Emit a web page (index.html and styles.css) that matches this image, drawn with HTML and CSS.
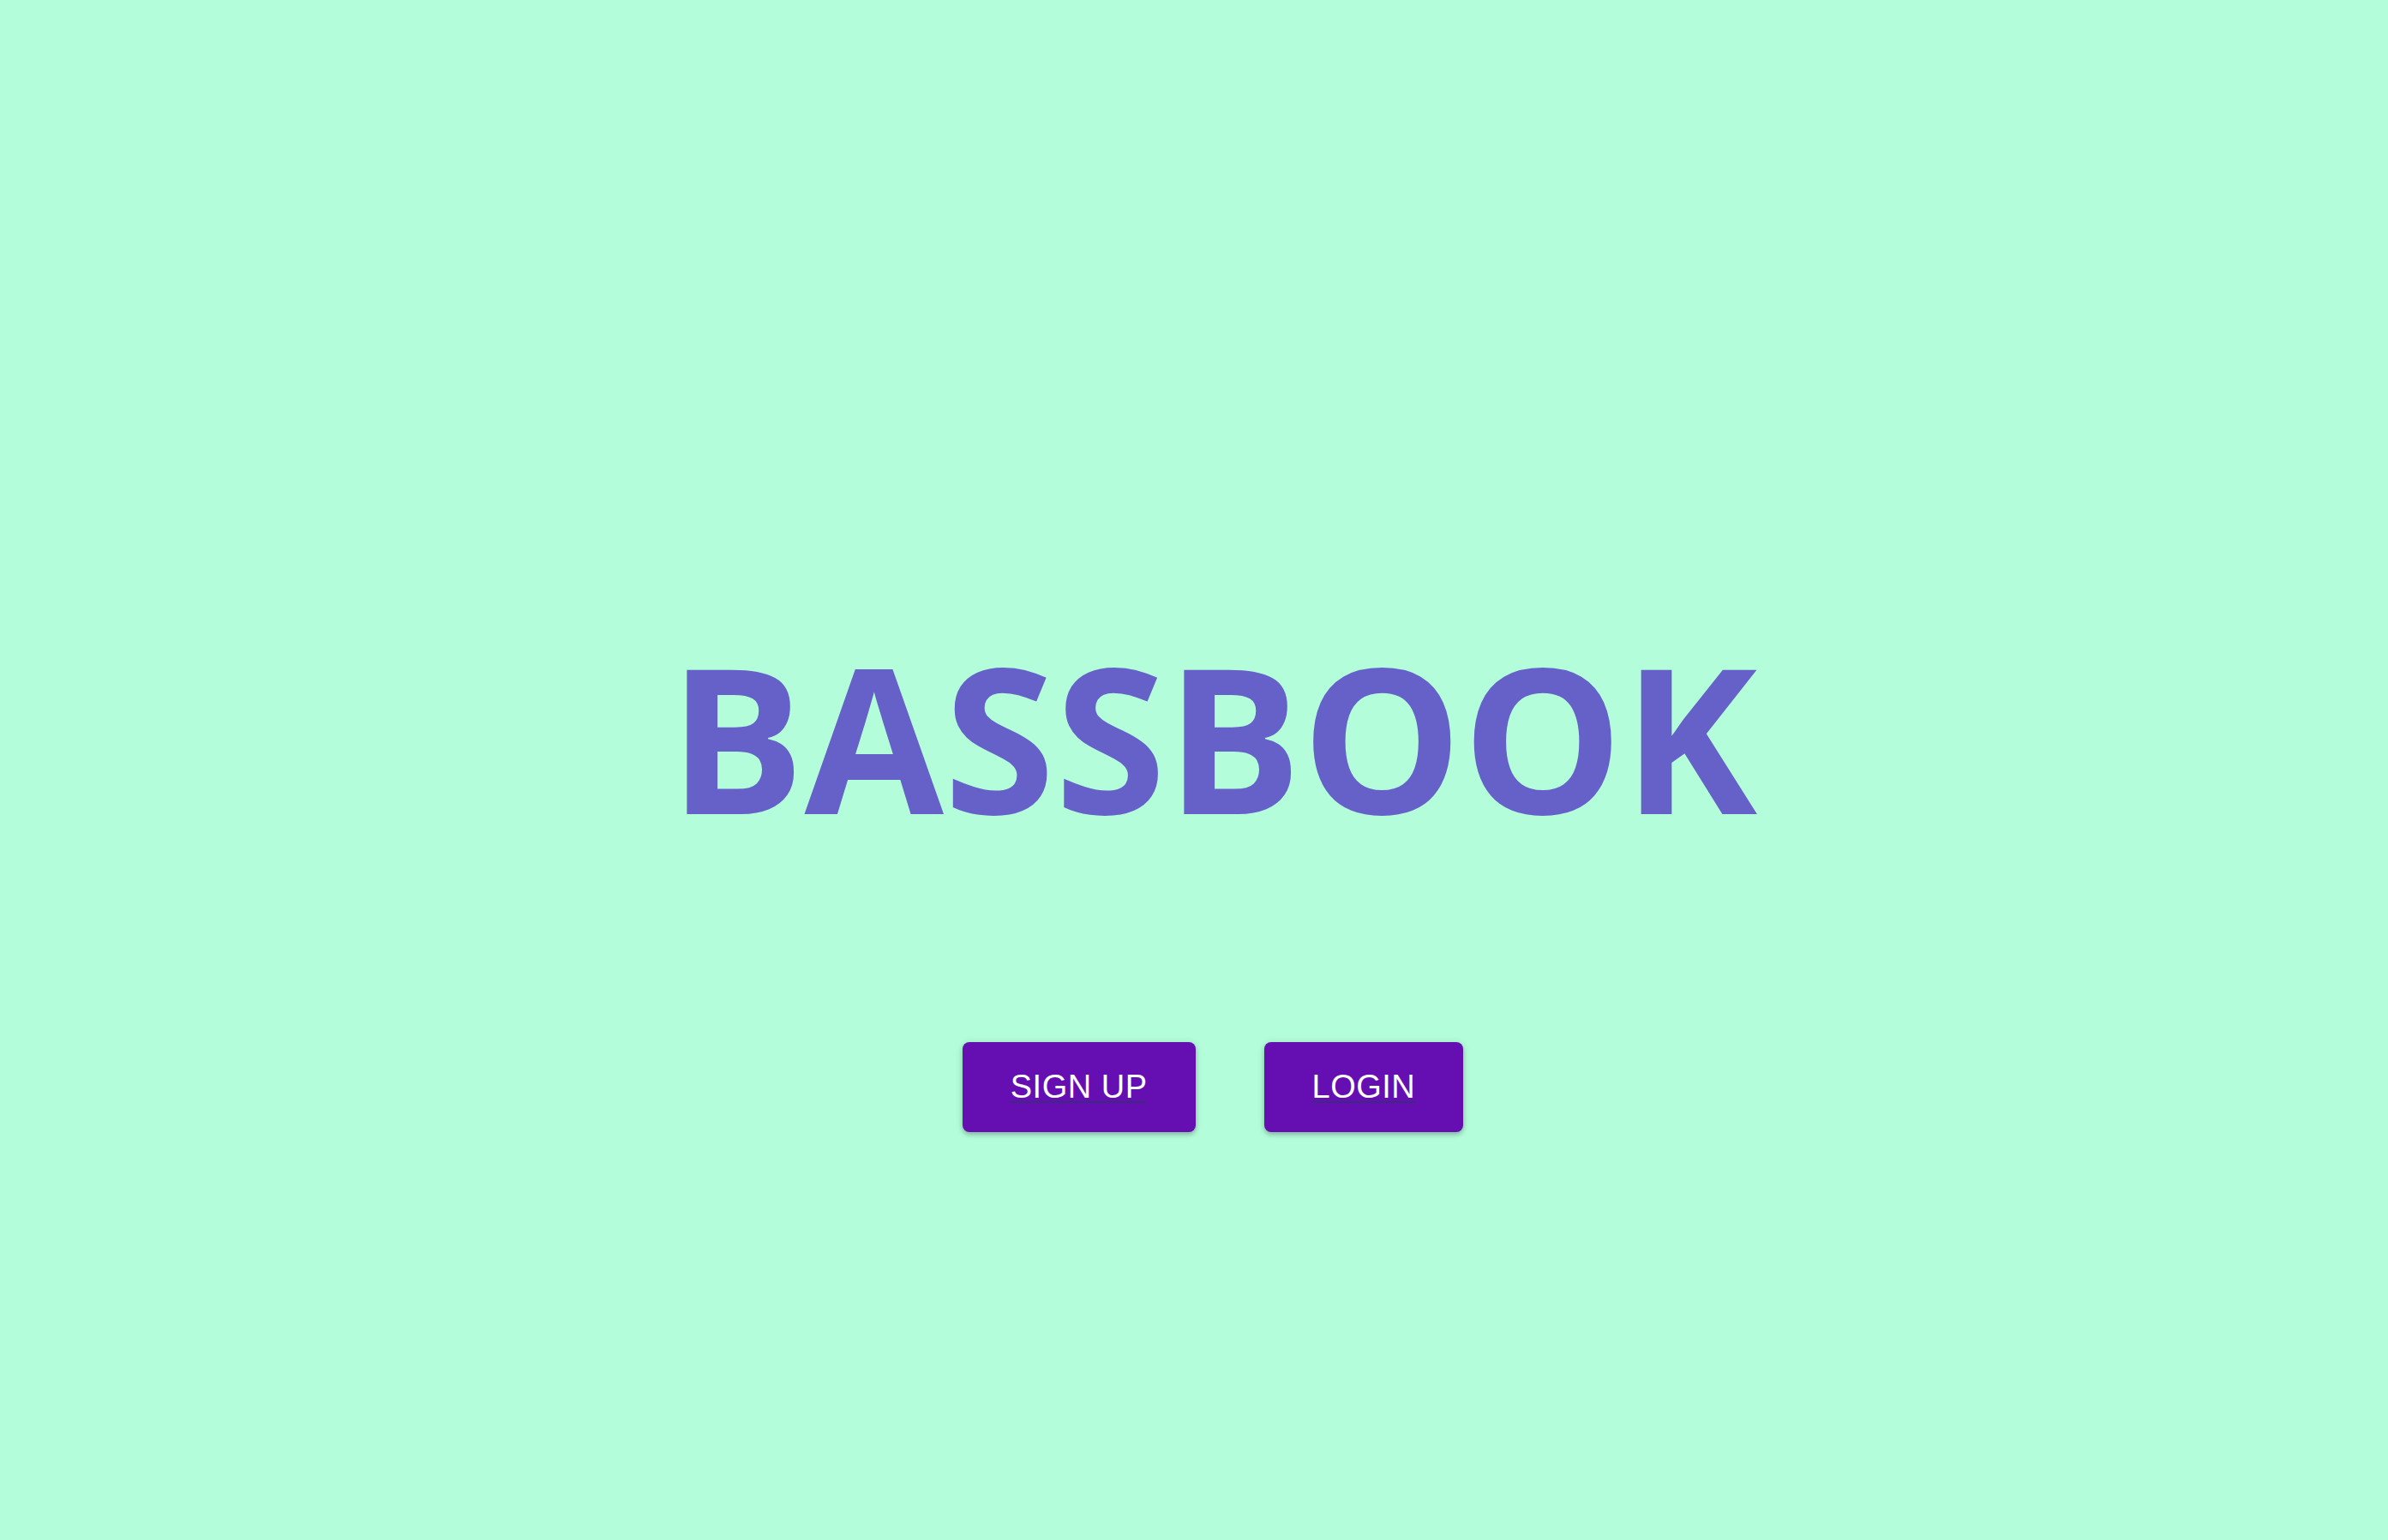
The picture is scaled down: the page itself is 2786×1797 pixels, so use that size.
FILE: index.html
```html
<!DOCTYPE html>
<html lang="en">
<head>
<meta charset="utf-8">
<title>Bassbook</title>
<link rel="stylesheet" href="styles.css">
</head>
<body>
<main class="landing">
  <h1 class="brand">BASSBOOK</h1>
  <div class="actions">
    <a class="btn" href="#signup">SIGN UP</a>
    <a class="btn" href="#login">LOGIN</a>
  </div>
</main>
</body>
</html>
```
FILE: styles.css
```css
html, body {
  margin: 0;
  padding: 0;
}
body {
  background: #b3fddb;
  min-height: 100vh;
}
.landing {
  display: flex;
  flex-direction: column;
  align-items: center;
  padding-top: 698px;
  padding-left: 44px;
}
.brand {
  margin: 0;
  font-family: "Open Sans", sans-serif;
  font-weight: 700;
  font-size: 235.5px;
  line-height: normal;
  color: #6661c9;
}
.actions {
  display: flex;
  gap: 80px;
  margin-top: 197px;
}
.btn {
  display: block;
  padding: 31px 56px;
  background: #650fb3;
  color: #ffffff;
  font-family: "Liberation Sans", Arial, sans-serif;
  font-size: 38px;
  letter-spacing: 0.5px;
  line-height: normal;
  border-radius: 8px;
  text-decoration: underline;
  text-decoration-color: #3d2a80;
  text-decoration-thickness: 2px;
  text-underline-offset: 4px;
  box-shadow: 0 3px 5px rgba(0,0,0,0.2), 0 1px 10px rgba(0,0,0,0.12);
}
```
